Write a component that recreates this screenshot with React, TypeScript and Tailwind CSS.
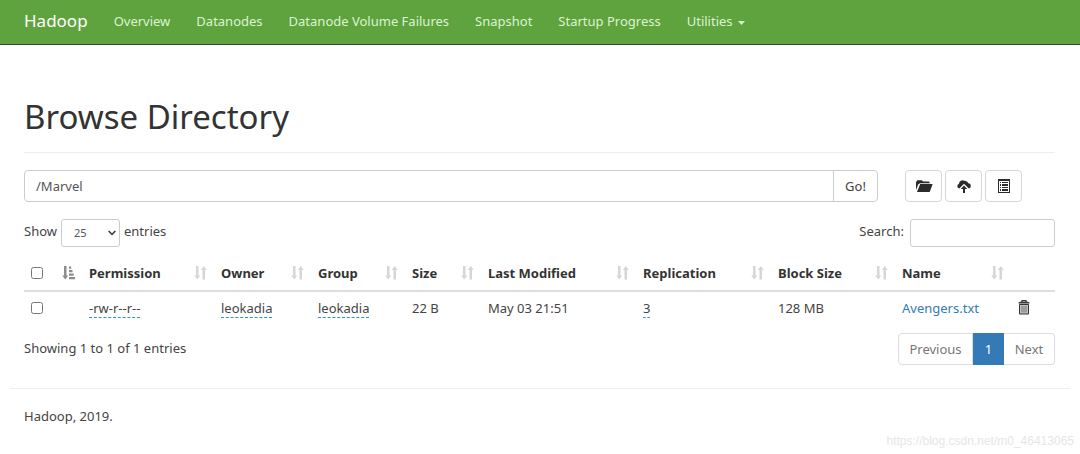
import type { ReactNode } from "react";

const navItems = ["Overview", "Datanodes", "Datanode Volume Failures", "Snapshot", "Startup Progress"];
const columns = ["Permission", "Owner", "Group", "Size", "Last Modified", "Replication", "Block Size", "Name"];

function SortIcon() {
  return (
    <svg viewBox="0 0 13 14" className="h-[14px] w-[13px] text-[#d6d6d6]" fill="currentColor" aria-hidden="true">
      <path d="M2 0h2.500v9.500H6.300L3.250 13.500.2 9.500H2zM8.500 13.500H11V4h1.800L9.750 0 6.700 4h1.800z" />
    </svg>
  );
}

function SortedIcon() {
  return (
    <svg viewBox="0 0 13 14" className="h-[14px] w-[13px] text-[#8c8c8c]" fill="currentColor" aria-hidden="true">
      <path d="M2 0h2.500v9.500H6.300L3.250 13.500.2 9.500H2zM7 .5h2.200v2.300H7zM7 4h3.500v2.300H7zM7 7.500h4.700v2.300H7zM7 11h6v2.300H7z" />
    </svg>
  );
}

function FolderIcon() {
  return (
    <svg viewBox="0 0 18 14" className="h-[14px] w-[18px]" fill="currentColor" aria-hidden="true">
      <path d="M1 11V3.300L2.300 1.300h4.500L8 2.600h6L15 4.300H4.900L3.200 5.500z" />
      <path d="M5.200 5h12.500L14.700 13H2z" />
    </svg>
  );
}

function UploadIcon() {
  return (
    <svg viewBox="0 0 16 14" className="h-[14px] w-4" fill="currentColor" aria-hidden="true">
      <path d="M3.300 9.500A2.500 2.500 0 0 1 1.300 7.200 2.500 2.500 0 0 1 3 4.800 3.500 3.500 0 0 1 8.300 1.800 3.800 3.800 0 0 1 12.300 4.300 2.800 2.800 0 0 1 14.800 7.200 2.600 2.600 0 0 1 12.800 9.500L8 4.700z" />
      <path d="M8 6.600 11.200 10H9v4H7v-4H4.800z" />
    </svg>
  );
}

function ListIcon() {
  return (
    <svg viewBox="0 0 14 14" className="size-[14px]" fill="currentColor" aria-hidden="true">
      <path fillRule="evenodd" d="M1 0h12v14H1zM2 2v11h10V2z" />
      <path d="M3 3h1v1H3zM5 3h6v1H5zM3 5h1v2H3zM5 5h6v2H5zM3 8h1v1H3zM5 8h6v1H5zM3 10h1v2H3zM5 10h6v2H5z" />
    </svg>
  );
}

function TrashIcon() {
  return (
    <svg viewBox="0 0 12 15" className="h-[15px] w-3" aria-hidden="true">
      <path d="M4 2V.700h4V2" fill="none" stroke="currentColor" strokeWidth="1.200" />
      <path d="M.300 3.600Q.500 1.800 2 1.800h8q1.500 0 1.700 1.800z" fill="currentColor" />
      <path d="M1.500 4.500h9V14h-9z" fill="#c4c0c4" stroke="currentColor" />
      <path d="M4 6v6.500M6 6v6.500M8 6v6.500" fill="none" stroke="#666" strokeWidth=".8" />
    </svg>
  );
}

function IconButton({ label, children }: { label: string; children: ReactNode }) {
  return (
    <button type="button" aria-label={label} className="flex h-8 w-[37px] items-center justify-center rounded border border-[#d6d6d6] bg-white text-[#2b2b2b]">
      {children}
    </button>
  );
}

function Editable({ children }: { children: ReactNode }) {
  return (
    <span className="inline-block border-b border-dashed border-current leading-[18px] text-[#2a93d5]">
      <span className="text-[#444]">{children}</span>
    </span>
  );
}

export default function App() {
  return (
    <div className="bg-white font-['Noto_Sans','Open_Sans',sans-serif] text-[13px] leading-5 text-[#444]">
      <nav className="flex h-[45px] items-center border-b border-[#2f4a2f] bg-[#5fa33e] px-6 pb-[2px] text-[#dcf3d0]">
        <a href="#" className="mr-[26px] text-[17px] text-white">Hadoop</a>
        <ul className="flex gap-[26px]">
          {navItems.map((item) => (
            <li key={item}><a href="#">{item}</a></li>
          ))}
          <li>
            <a href="#" className="flex items-center gap-[5px]">
              Utilities
              <svg viewBox="0 0 7 4" className="mt-[3px] h-1 w-[7px]" fill="currentColor" aria-hidden="true"><path d="M0 0h7L3.500 4z" /></svg>
            </a>
          </li>
        </ul>
      </nav>

      <main className="pl-6 pr-[25px] pt-[52px]">
        <h1 className="border-b border-[#eee] pb-[15px] text-[33px] leading-10 text-[#333]">Browse Directory</h1>

        <div className="mt-[17px] flex">
          <form className="flex flex-1" onSubmit={(e) => e.preventDefault()}>
            <input aria-label="Directory" defaultValue="/Marvel" className="h-8 min-w-0 flex-1 rounded-l border border-[#ccc] px-[11px] text-[#555]" />
            <button type="submit" className="-ml-px h-8 w-[45px] rounded-r border border-[#ccc]">Go!</button>
          </form>
          <div className="ml-[27px] mr-[33px] flex gap-[3px]">
            <IconButton label="Create directory"><FolderIcon /></IconButton>
            <IconButton label="Upload files"><UploadIcon /></IconButton>
            <IconButton label="Cut and paste"><ListIcon /></IconButton>
          </div>
        </div>

        <div className="mt-[17px] flex justify-between">
          <label className="flex gap-1">
            <span className="pt-[2px]">Show</span>
            <span className="grid">
              <select defaultValue="25" className="col-start-1 row-start-1 h-7 w-[59px] appearance-none rounded-[3px] border border-[#ccc] bg-white pl-3 text-[11px] text-[#555]">
                <option>25</option>
                <option>50</option>
                <option>100</option>
              </select>
              <svg viewBox="0 0 8 6" className="pointer-events-none col-start-1 row-start-1 mr-1 h-[6px] w-2 self-center justify-self-end text-[#333]" fill="none" stroke="currentColor" strokeWidth="1.500" aria-hidden="true"><path d="M.700 1 4 4.500 7.300 1" /></svg>
            </span>
            <span className="pt-[2px]">entries</span>
          </label>
          <label className="flex gap-[6px]">
            <span className="pt-[2px]">Search:</span>
            <input type="search" className="h-7 w-[145px] rounded-[3px] border border-[#ccc] px-2" />
          </label>
        </div>

        <table className="mt-2 w-full table-fixed border-collapse text-left">
          <colgroup>
            <col className="w-[30px]" />
            <col className="w-[27px]" />
            <col className="w-[132px]" />
            <col className="w-[97px]" />
            <col className="w-[94px]" />
            <col className="w-[76px]" />
            <col className="w-[155px]" />
            <col className="w-[135px]" />
            <col className="w-[124px]" />
            <col className="w-[116px]" />
            <col className="w-[45px]" />
          </colgroup>
          <thead>
            <tr className="h-9 border-b-2 border-[#ddd]">
              <th className="pl-[7px]"><input type="checkbox" aria-label="Select all" className="block size-3" /></th>
              <th className="pl-2"><SortedIcon /></th>
              {columns.map((column) => (
                <th key={column} className="pl-2 pr-[6px] font-bold text-[#333]">
                  <div className="flex items-center justify-between whitespace-nowrap">{column}<SortIcon /></div>
                </th>
              ))}
              <th aria-label="Actions" />
            </tr>
          </thead>
          <tbody>
            <tr className="h-8">
              <td className="pl-[7px]"><input type="checkbox" aria-label="Select Avengers.txt" className="block size-3" /></td>
              <td />
              <td className="pl-2"><Editable>-rw-r--r--</Editable></td>
              <td className="pl-2"><Editable>leokadia</Editable></td>
              <td className="pl-2"><Editable>leokadia</Editable></td>
              <td className="pl-2">22 B</td>
              <td className="pl-2">May 03 21:51</td>
              <td className="pl-2"><Editable>3</Editable></td>
              <td className="pl-2">128 MB</td>
              <td className="pl-2"><a href="#" className="text-[#337ab7]">Avengers.txt</a></td>
              <td className="pl-2"><button type="button" aria-label="Delete" className="block text-[#333]"><TrashIcon /></button></td>
            </tr>
          </tbody>
        </table>

        <div className="mt-[10px] flex justify-between">
          <p className="pt-[5px]">Showing 1 to 1 of 1 entries</p>
          <div className="flex h-8 text-[#777]">
            <button type="button" className="w-[75px] rounded-l border border-[#ddd]">Previous</button>
            <button type="button" className="w-[31px] bg-[#337ab7] text-white">1</button>
            <button type="button" className="w-[51px] rounded-r border border-l-0 border-[#ddd]">Next</button>
          </div>
        </div>
      </main>

      <footer className="mx-[10px] mt-[23px] border-t border-[#eee] px-[14px] pt-[17px]">
        <p>Hadoop, 2019.</p>
        <p className="-mr-[18px] mt-[5px] text-right font-['Liberation_Sans',sans-serif] text-[12px] text-[#e6e6e6]">https://blog.csdn.net/m0_46413065</p>
      </footer>
    </div>
  );
}
